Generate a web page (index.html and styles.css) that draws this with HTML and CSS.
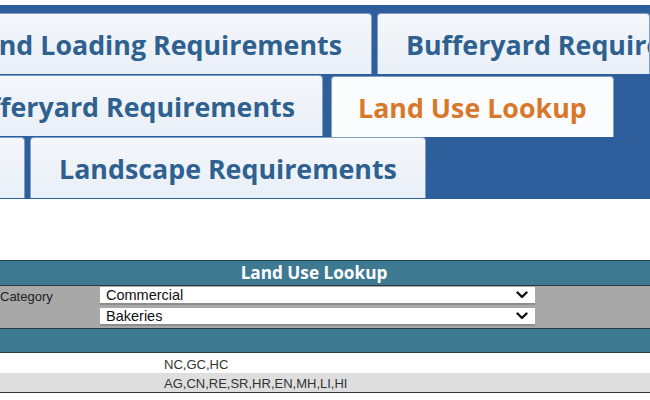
FILE: index.html
```html
<!DOCTYPE html>
<html>
<head>
<meta charset="utf-8">
<link rel="stylesheet" href="styles.css">
</head>
<body>
<div class="band">
  <div class="row">
    <div class="tab first w1"><span>nd Loading Requirements</span></div>
    <div class="tab"><span>Bufferyard Requirements</span></div>
  </div>
  <div class="row">
    <div class="tab first w2"><span>fferyard Requirements</span></div>
    <div class="tab active"><span>Land Use Lookup</span></div>
  </div>
  <div class="row">
    <div class="tab first w3"></div>
    <div class="tab"><span>Landscape Requirements</span></div>
  </div>
</div>

<div class="lookup">
  <div class="hdr">Land Use Lookup</div>
  <div class="selrows">
    <div class="lbl">Category</div>
    <div class="sel"><span>Commercial</span><svg class="chev" viewBox="0 0 12 8" width="12" height="8"><path d="M1.5 1.5 L6 6 L10.5 1.5" fill="none" stroke="#111" stroke-width="2.4" stroke-linecap="round" stroke-linejoin="round"/></svg></div>
    <div class="fill"></div>
    <div class="lbl"></div>
    <div class="sel"><span>Bakeries</span><svg class="chev" viewBox="0 0 12 8" width="12" height="8"><path d="M1.5 1.5 L6 6 L10.5 1.5" fill="none" stroke="#111" stroke-width="2.4" stroke-linecap="round" stroke-linejoin="round"/></svg></div>
    <div class="fill"></div>
  </div>
  <div class="bar"></div>
  <div class="drow"><div></div><div>NC,GC,HC</div></div>
  <div class="drow alt"><div></div><div>AG,CN,RE,SR,HR,EN,MH,LI,HI</div></div>
</div>
</body>
</html>
```

FILE: styles.css
```css
html, body {
  margin: 0;
  padding: 0;
  background: #ffffff;
  overflow: hidden;
}
body {
  width: 650px;
  height: 400px;
  font-family: "Liberation Sans", Arial, sans-serif;
}
.band {
  margin-top: 5px;
  padding-top: 8px;
  background: #2e5e9c;
  height: 186px;
  display: flex;
  flex-direction: column;
}
.row {
  height: 62px;
  display: flex;
  gap: 5px;
}
.tab {
  height: 61px;
  box-sizing: border-box;
  padding: 0 28px;
  display: flex;
  align-items: center;
  background: linear-gradient(#f4f7fb, #e9eff7);
  border: 1px solid #7e9fc6;
  border-bottom: none;
  border-radius: 4px 4px 0 0;
  color: #2f6190;
  font-family: "Open Sans", "DejaVu Sans", sans-serif;
  font-weight: 700;
  font-size: 26.8px;
  white-space: nowrap;
  overflow: hidden;
}
.tab.first {
  justify-content: flex-end;
  border-left: none;
  border-radius: 0 4px 0 0;
  flex: none;
}
.w1 { width: 372px; padding-right: 29px; }
.w2 { width: 323px; padding-right: 27px; }
.w3 { width: 25px; padding: 0; }
.row:nth-child(2) { gap: 8px; }
.tab.active {
  background: #fbfcfd;
  color: #d8782b;
  margin-top: 1px;
  padding: 0 26px;
}
.lookup {
  margin-top: 61px;
  font-size: 13px;
  color: #333;
}
.hdr {
  height: 24px;
  border-top: 1px solid #22404c;
  background: #3d7a92;
  color: #ffffff;
  font-family: "Open Sans", "DejaVu Sans", sans-serif;
  font-weight: 700;
  font-size: 17.2px;
  line-height: 24px;
  text-align: center;
  padding-right: 22px;
}
.selrows {
  border-top: 1px solid #2a3a40;
  background: #a8a8a8;
  padding: 1px 0 2px;
  display: grid;
  grid-template-columns: 100px 435px 1fr;
  grid-auto-rows: 18px;
  row-gap: 3px;
}
.lbl {
  color: #222;
  font-size: 13px;
  line-height: 18px;
  padding-top: 1px;
}
.sel {
  background: #ffffff;
  border-bottom: 2px solid #8d8d8d;
  box-sizing: border-box;
  display: flex;
  align-items: center;
  justify-content: space-between;
  padding: 0 7px 0 6px;
  font-size: 14.5px;
  color: #111;
}
.chev { flex: none; }
.bar {
  height: 23px;
  border-top: 1px solid #2a3a40;
  background: #3d7a92;
}
.drow {
  display: grid;
  grid-template-columns: 164px 1fr;
  height: 17px;
  padding-top: 3px;
  line-height: 17px;
  border-top: 1px solid #2a3a40;
  background: #ffffff;
}
.drow.alt {
  height: 16px;
  line-height: 16px;
  border-top: none;
  background: #dedede;
  border-bottom: 1px solid #333;
}
```
